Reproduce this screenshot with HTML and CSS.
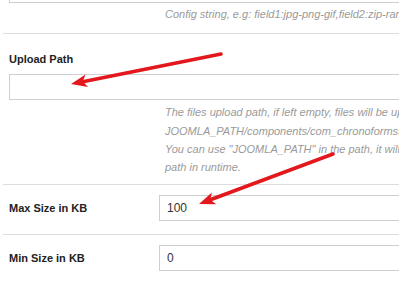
FILE: index.html
```html
<!DOCTYPE html>
<html lang="en">
<head>
    <meta charset="UTF-8">
    <meta name="viewport" content="width=device-width, initial-scale=1.0">
    <title>Upload settings</title>
    <link rel="stylesheet" href="styles.css">
</head>
<body>
    <div class="form">
        <div class="row row-cut">
            <input class="field" type="text">
            <p class="help">Config string, e.g: field1:jpg-png-gif,field2:zip-rar,default:jpg-png-gif-zip</p>
        </div>
        <div class="row stacked">
            <label class="label">Upload Path</label>
            <input class="field" type="text">
            <p class="help">
                The files upload path, if left empty, files will be uploaded to:<br>
                JOOMLA_PATH/components/com_chronoforms5/uploads/FORM_NAME/<br>
                You can use "JOOMLA_PATH" in the path, it will be replaced by your site root<br>
                path in runtime.
            </p>
        </div>
        <div class="row inline">
            <label class="label">Max Size in KB</label>
            <input class="field" type="text" value="100">
        </div>
        <div class="row inline">
            <label class="label">Min Size in KB</label>
            <input class="field" type="text" value="0">
        </div>
    </div>
    <svg class="arrows" width="399" height="284" viewBox="0 0 399 284">
        <line x1="221" y1="54" x2="84" y2="81.5" stroke="#e2181d" stroke-width="3.6" stroke-linecap="round"/>
        <polygon points="71,84 85.5,74.5 82.8,81.6 88,87" fill="#e2181d"/>
        <line x1="333" y1="154" x2="211" y2="199.5" stroke="#e2181d" stroke-width="3.6" stroke-linecap="round"/>
        <polygon points="199,204 211.9,192.6 210.2,199.8 216.3,204.2" fill="#e2181d"/>
    </svg>
</body>
</html>
```

FILE: styles.css
```css
* { margin: 0; padding: 0; box-sizing: border-box; }
html, body { overflow: hidden; }
body {
    width: 399px;
    height: 284px;
    font-family: "Liberation Sans", Arial, sans-serif;
    background: #fff;
    color: #333;
    position: relative;
}
.form {
    width: 760px;
    padding-left: 3px;
}
.row {
    border-bottom: 1px solid #dddddd;
    padding: 10px 6px 13px 6px;
}
.label {
    font-size: 11px;
    font-weight: bold;
    line-height: 18px;
    color: #222;
}
.field {
    display: block;
    width: 600px;
    height: 26px;
    border: 1px solid #cfcfcf;
    background: #fff;
    padding: 0 7px;
    font-family: "Liberation Sans", Arial, sans-serif;
    font-size: 12px;
    color: #333;
    outline: none;
}
.help {
    margin: 3px 0 0 156px;
    font-size: 11px;
    font-style: italic;
    line-height: 18.3px;
    color: #9a9a9a;
    white-space: nowrap;
}
.row-cut {
    padding-top: 0;
    padding-bottom: 10px;
}
.row-cut .field { margin-top: -23px; }
.row-cut .help { margin-top: 2px; }
.stacked {
    padding-top: 15px;
    padding-bottom: 8px;
}
.stacked .field { margin-top: 6px; }
.inline {
    display: grid;
    grid-template-columns: 150px 1fr;
    align-items: center;
}
.arrows {
    position: absolute;
    left: 0;
    top: 0;
    pointer-events: none;
}
```
